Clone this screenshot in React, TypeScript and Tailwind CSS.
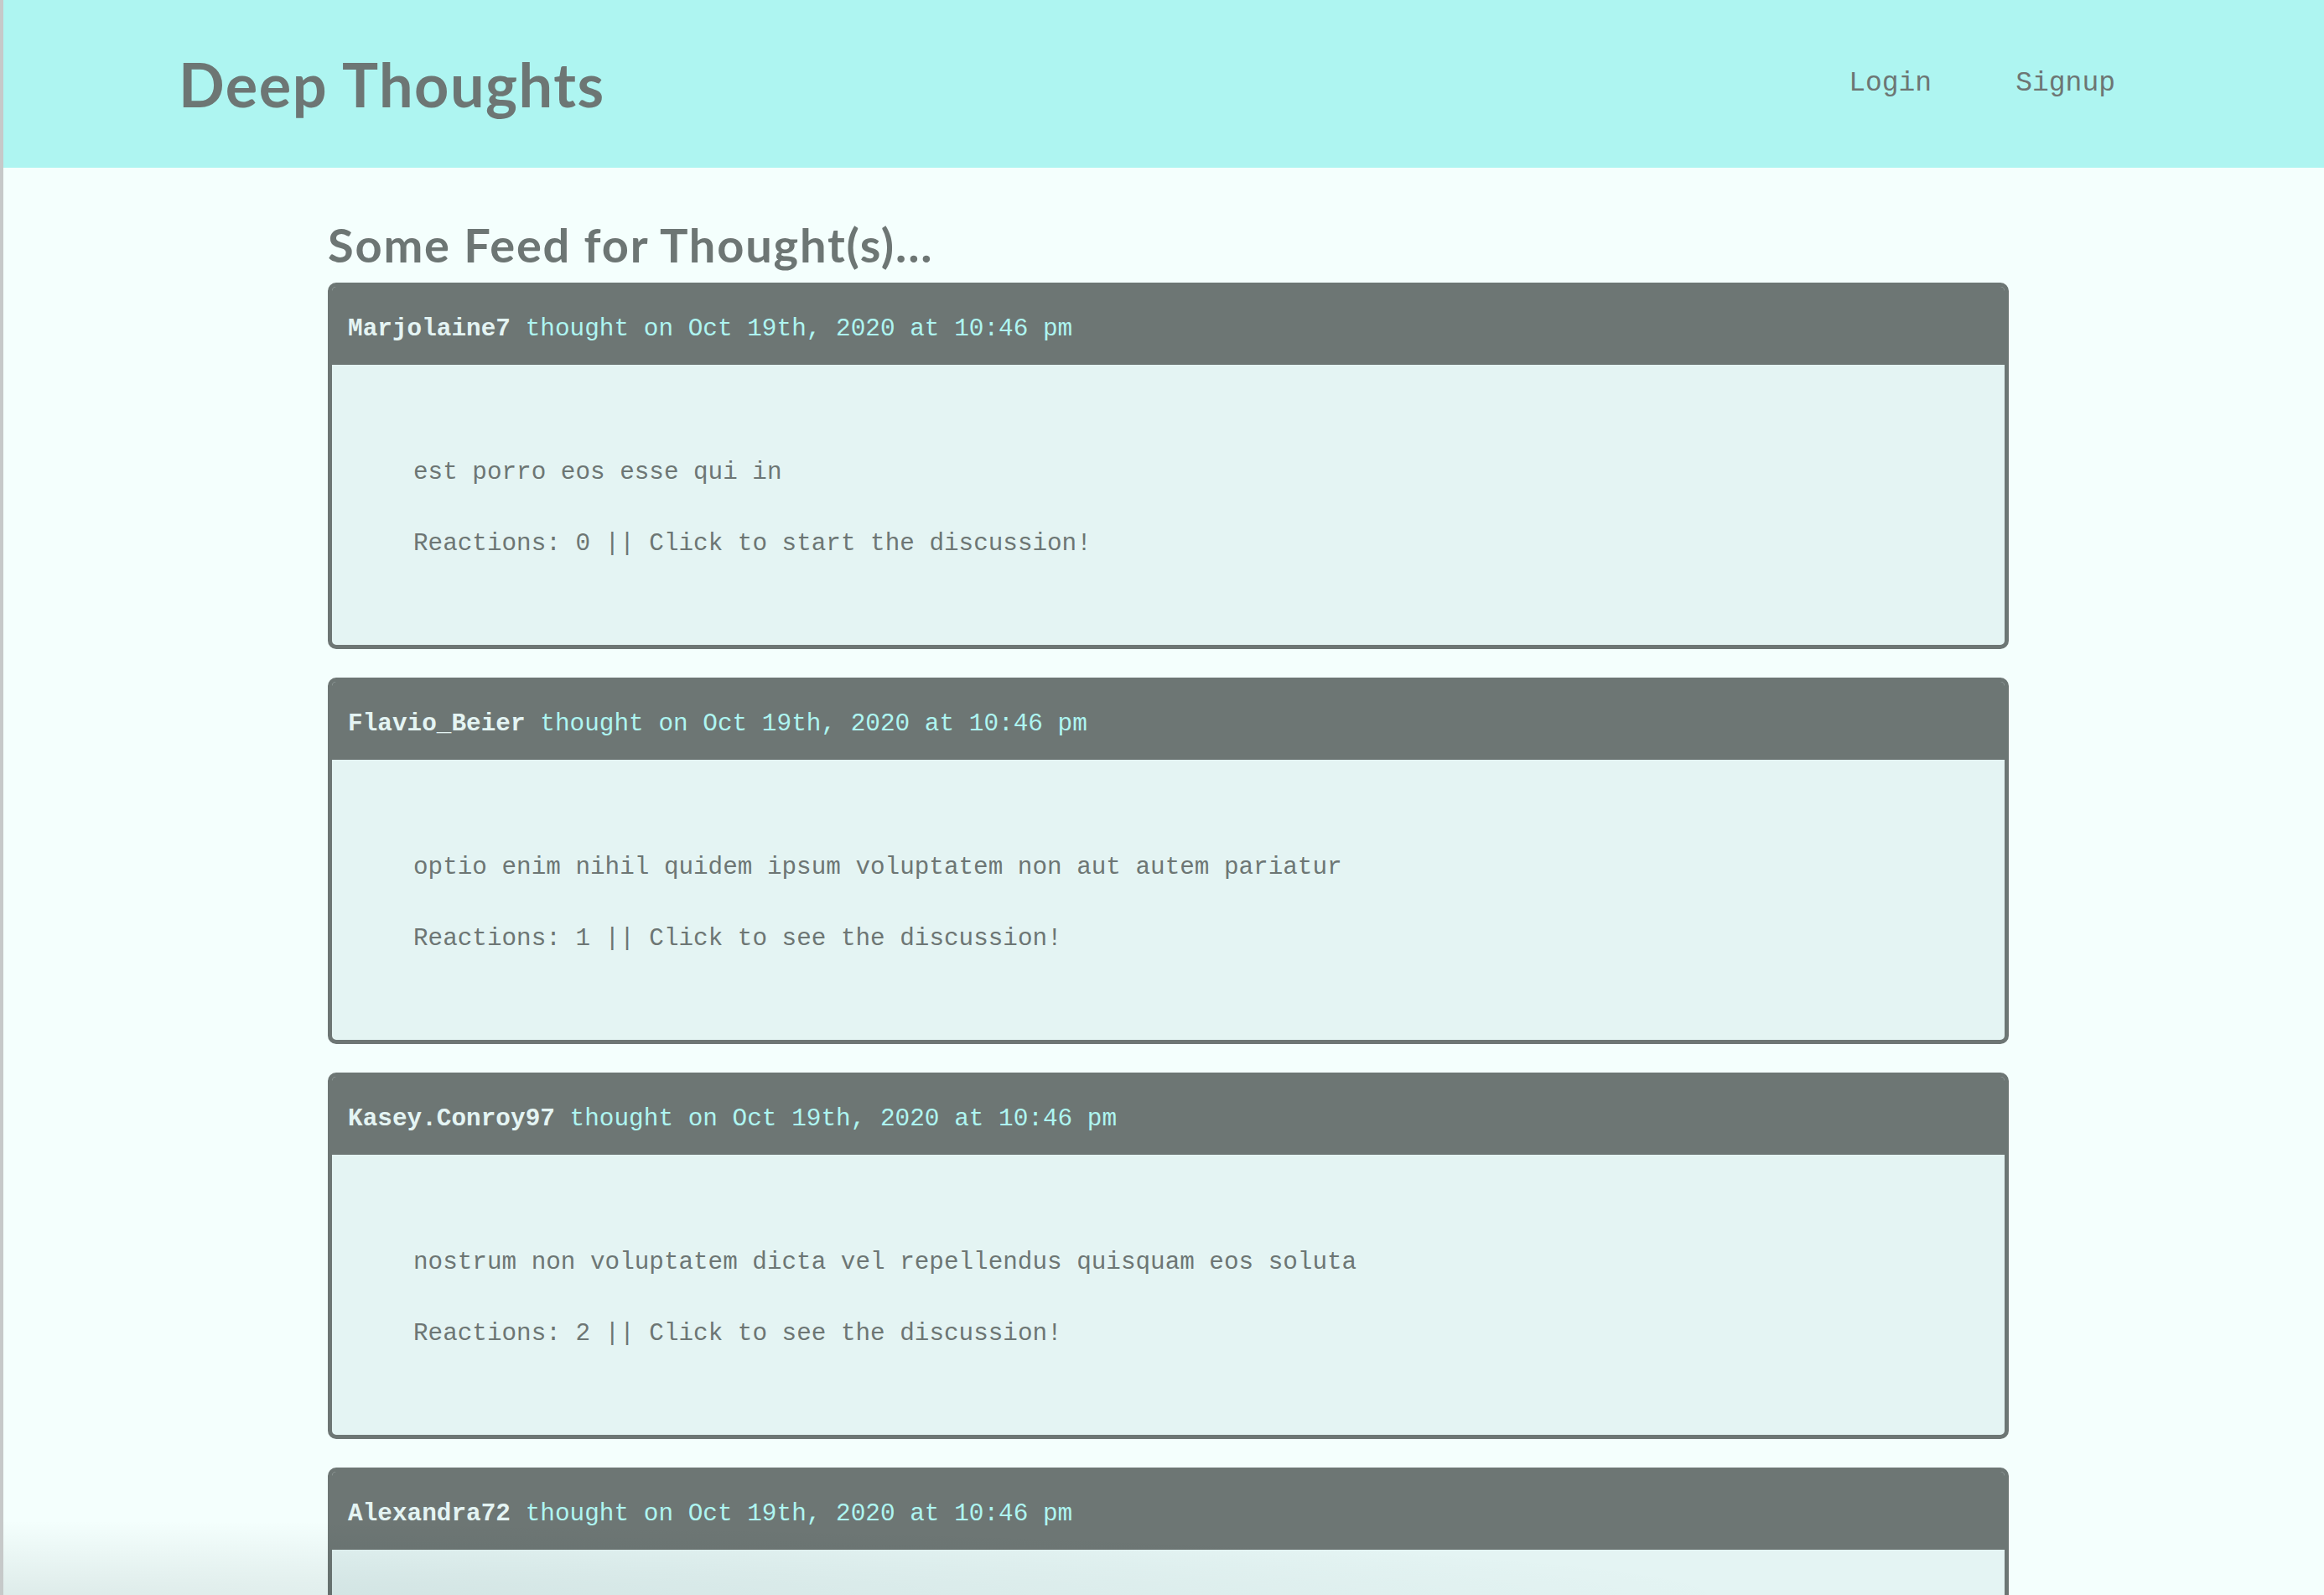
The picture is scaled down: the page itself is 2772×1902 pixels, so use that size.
const thoughts = [
  {
    username: 'Marjolaine7',
    createdAt: 'Oct 19th, 2020 at 10:46 pm',
    text: 'est porro eos esse qui in',
    reactions: 0,
  },
  {
    username: 'Flavio_Beier',
    createdAt: 'Oct 19th, 2020 at 10:46 pm',
    text: 'optio enim nihil quidem ipsum voluptatem non aut autem pariatur',
    reactions: 1,
  },
  {
    username: 'Kasey.Conroy97',
    createdAt: 'Oct 19th, 2020 at 10:46 pm',
    text: 'nostrum non voluptatem dicta vel repellendus quisquam eos soluta',
    reactions: 2,
  },
  {
    username: 'Alexandra72',
    createdAt: 'Oct 19th, 2020 at 10:46 pm',
    text: 'sed aut et quo aperiam',
    reactions: 0,
  },
]

const mono = "font-['Liberation_Mono',monospace]"
const display = "font-['Lato','Open_Sans',sans-serif]"

function ThoughtCard({ thought }: { thought: (typeof thoughts)[number] }) {
  return (
    <div className="border-[5px] border-[#6d7674] rounded-[10px] overflow-hidden bg-[#e4f4f3]">
      <p className={`${mono} bg-[#6d7674] text-[29.4px] leading-[44px] pl-[19px] pt-[29px] pb-[20px] text-[#aef5f1]`}>
        <span className="font-bold text-[#e4f4f3]">{thought.username}</span> thought on {thought.createdAt}
      </p>
      <div className={`${mono} text-[29.3px] leading-[44px] text-[#6d7674] pl-[97px] pt-[107px] pb-[98px] flex flex-col gap-[41px]`}>
        <p>{thought.text}</p>
        <p>
          Reactions: {thought.reactions} || Click to{' '}
          {thought.reactions ? 'see' : 'start'} the discussion!
        </p>
      </div>
    </div>
  )
}

export default function App() {
  return (
    <div className="relative h-screen overflow-hidden bg-[#f4fffd] border-l-4 border-[#c6c9c9]">
      <header className="h-[200px] bg-[#aef5f1] flex items-center justify-between pl-[209px] pr-[249px]">
        <h1 className={`${display} font-bold text-[72px] tracking-[1.5px] leading-none text-[#6d7674]`}>
          Deep Thoughts
        </h1>
        <nav className={`${mono} text-[33px] text-[#6d7674] flex gap-[100px]`}>
          <a href="#">Login</a>
          <a href="#">Signup</a>
        </nav>
      </header>

      <main className="pl-[387px] w-[2392px] pt-[64px]">
        <h2 className={`${display} font-bold text-[56px] tracking-[1.8px] leading-[56px] text-[#6d7674] mb-[17px]`}>
          Some Feed for Thought(s)...
        </h2>
        <div className="flex flex-col gap-[34px]">
          {thoughts.map((t) => (
            <ThoughtCard key={t.username} thought={t} />
          ))}
        </div>
      </main>

      <div className="pointer-events-none absolute left-0 bottom-0 w-[2100px] h-[90px] bg-[radial-gradient(ellipse_at_bottom_left,rgba(0,40,40,0.09),transparent_70%)]" />
    </div>
  )
}
